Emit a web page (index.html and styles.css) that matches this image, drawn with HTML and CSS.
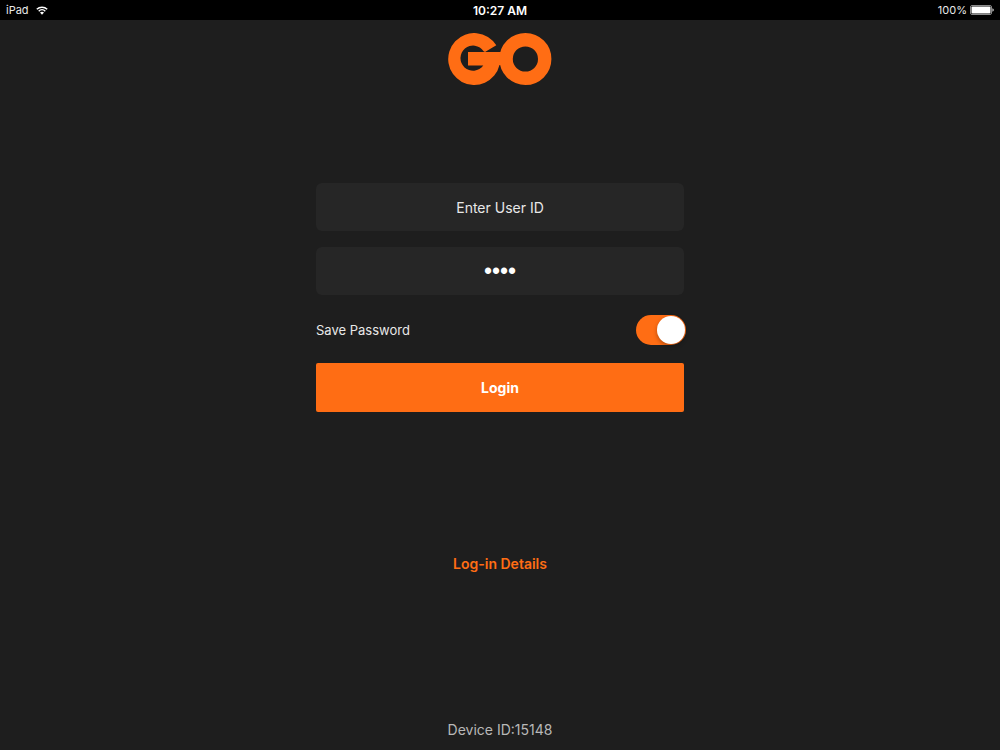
FILE: index.html
```
<!DOCTYPE html>
<html lang="en">
<head>
<meta charset="utf-8">
<meta name="viewport" content="width=device-width, initial-scale=1">
<title>GO Login</title>
<link rel="stylesheet" href="styles.css">
</head>
<body>
<header class="status-bar">
  <div class="status-left">
    <span>iPad</span>
    <svg class="wifi" viewBox="0 0 12 9" aria-hidden="true">
      <path d="M.8 3.3a7.4 7.4 0 0 1 10.4 0M2.7 5.2a4.7 4.7 0 0 1 6.6 0" fill="none" stroke="#fff" stroke-width="1.5"/>
      <path d="M4 6.6a2.9 2.9 0 0 1 4 0L6 8.8z" fill="#fff"/>
    </svg>
  </div>
  <span class="status-time">10:27 AM</span>
  <div class="status-right">
    <span>100%</span>
    <svg class="battery" viewBox="0 0 24 10" aria-hidden="true">
      <rect x=".5" y=".5" width="21" height="9" rx="1.5" fill="none" stroke="#8a8a8a"/>
      <rect x="1.5" y="1.5" width="19" height="7" rx="1" fill="#fff"/>
      <path d="M22.5 3.3a1.8 1.8 0 0 1 0 3.4z" fill="#fff"/>
    </svg>
  </div>
</header>
<main class="screen">
  <svg class="logo" viewBox="0 0 104 52" role="img" aria-label="GO">
    <path fill="#ff6d14" d="M48.3 12.3A26 26 0 1 0 51.5 32H54V19H20V32.5H35.3A12.6 12.6 0 1 1 35.6 18.2L37 19Z"/>
    <circle cx="77.4" cy="26" r="19.3" fill="none" stroke="#ff6d14" stroke-width="13.4"/>
  </svg>
  <form class="login-form">
    <input class="field" type="text" placeholder="Enter User ID" aria-label="User ID">
    <input class="field field-password" type="password" value="1234" aria-label="Password">
    <div class="save-row">
      <label for="save">Save Password</label>
      <input class="switch" id="save" type="checkbox" role="switch" checked>
    </div>
    <button class="login-button" type="button">Login</button>
  </form>
  <a class="details-link" href="#">Log-in Details</a>
  <footer class="device">Device ID:15148</footer>
</main>
</body>
</html>
```
FILE: styles.css
```
* {
  box-sizing: border-box;
}

body {
  margin: 0;
  min-height: 100vh;
  display: flex;
  flex-direction: column;
  background: #1e1e1e;
  color: #e8e8e8;
  font-family: Inter, "Liberation Sans", sans-serif;
  font-size: 14px;
}

.status-bar {
  display: grid;
  grid-template-columns: 1fr auto 1fr;
  align-items: center;
  height: 20px;
  padding: 0 6px;
  background: #000;
  color: #e8e8e8;
  font-size: 11px;
}

.status-left,
.status-right {
  display: flex;
  align-items: center;
}

.status-left {
  gap: 7px;
}

.status-right {
  justify-content: flex-end;
  gap: 3px;
}

.status-time {
  color: #fff;
  font-size: 12px;
  font-weight: 600;
}

.wifi {
  width: 12px;
  height: 9px;
}

.battery {
  width: 24px;
  height: 10px;
}

.screen {
  flex: 1;
  display: flex;
  flex-direction: column;
  align-items: center;
  padding: 13px 16px 11px;
}

.logo {
  width: 104px;
  height: 52px;
}

.login-form {
  display: flex;
  flex-direction: column;
  width: 100%;
  max-width: 368px;
  margin-top: 98px;
}

.field {
  width: 100%;
  height: 48px;
  margin: 0 0 16px;
  padding: 0 16px;
  border: 0;
  border-radius: 6px;
  background: #262626;
  color: #fff;
  font: inherit;
  text-align: center;
}

.field::placeholder {
  color: #e8e8e8;
  opacity: 1;
}

.field-password {
  margin-bottom: 20px;
  font-family: "Liberation Sans", sans-serif;
  font-size: 23px;
}

.save-row {
  display: flex;
  align-items: center;
  justify-content: space-between;
  margin: 0 -2px 18px 0;
  font-size: 13px;
}

.switch {
  appearance: none;
  display: flex;
  justify-content: flex-end;
  width: 50px;
  height: 30px;
  margin: 0;
  padding: 1px;
  border-radius: 15px;
  background: #ff6d14;
}

.switch::before {
  content: "";
  width: 28px;
  height: 28px;
  border-radius: 50%;
  background: #fff;
  box-shadow: 0 2px 4px rgba(0, 0, 0, 0.3);
}

.switch:not(:checked) {
  justify-content: flex-start;
  background: #555;
}

.login-button {
  height: 49px;
  border: 0;
  border-radius: 2px;
  background: #ff6d14;
  color: #fff;
  font: inherit;
  font-weight: 700;
}

.details-link {
  margin-top: 142px;
  color: #ff6d14;
  font-weight: 600;
  line-height: 20px;
  text-decoration: none;
}

.device {
  margin-top: auto;
  color: #b8b8b8;
  line-height: 18px;
}
```
